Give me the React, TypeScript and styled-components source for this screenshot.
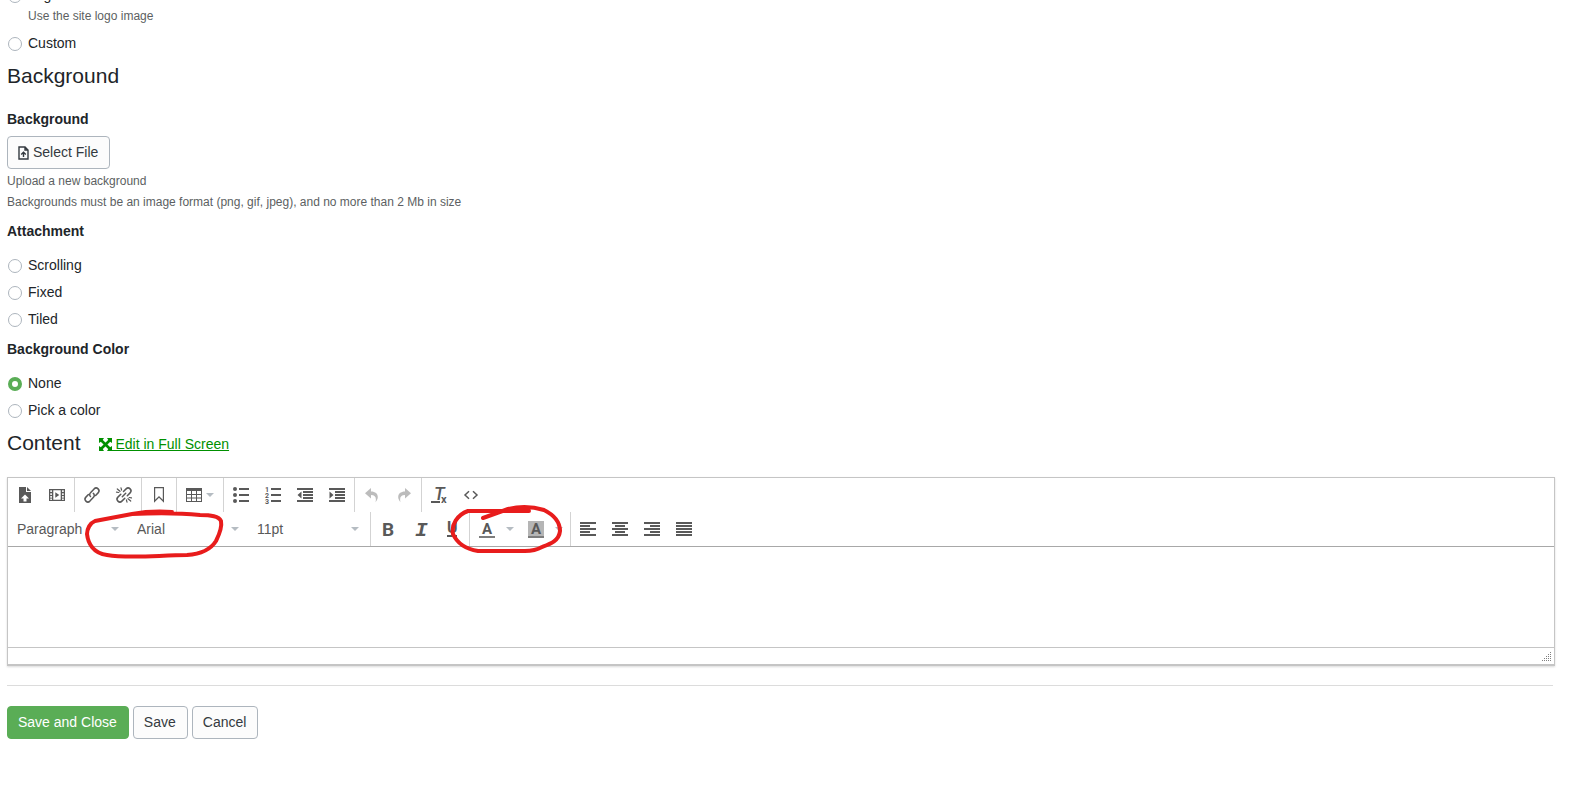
import React, { useState } from "react";
import styled, { createGlobalStyle } from "styled-components";

const GlobalStyle = createGlobalStyle`
  *, *::before, *::after { box-sizing: border-box; }
  html, body { margin: 0; background: #fff; }
  body {
    font: 14px/21px "Liberation Sans", Arial, sans-serif;
    color: #212529;
    overflow-x: hidden;
  }
`;

const ink = "#595959";
const line = "#c5c5c5";

const Page = styled.main`
  margin-top: -18px;
  padding: 0 15px 24px 7px;
`;

const Heading = styled.h2`
  margin: 0;
  font-size: 21px;
  line-height: 38px;
  font-weight: 400;
`;

const HeadingRow = styled.div`
  display: flex;
  align-items: center;
  gap: 18px;
  margin-bottom: 15px;
`;

const Field = styled.fieldset<{ $gap?: number }>`
  display: block;
  min-width: 0;
  border: 0;
  margin: 0;
  padding: ${(p) => p.$gap ?? 6}px 0 0;
`;

const FieldTitle = styled.div<{ $space?: number }>`
  font-weight: 700;
  margin-bottom: ${(p) => p.$space ?? 10}px;
`;

const Choice = styled.label`
  display: flex;
  align-items: center;
  gap: 6px;
  height: 27px;
  padding-left: 1px;
`;

const Radio = styled.input`
  appearance: none;
  width: 14px;
  height: 14px;
  margin: 1px 0 0;
  border: 1px solid #adb5bd;
  border-radius: 50%;
  background: #fff;
  &:checked {
    border: 4px solid #5aad56;
  }
`;

const Hint = styled.p`
  margin: 0;
  font-size: 12px;
  line-height: 21px;
  color: #5c5f62;
`;

const ChoiceHint = styled(Hint)`
  padding: 0 0 6px 21px;
  line-height: 15px;
`;

const Button = styled.button<{ $primary?: boolean }>`
  display: inline-flex;
  align-items: center;
  gap: 4px;
  height: 33px;
  padding: 0 11px 0 10px;
  border: 1px solid ${(p) => (p.$primary ? "#5aad56" : "#adb5bd")};
  border-radius: 4px;
  background: ${(p) => (p.$primary ? "#5aad56" : "#fcfcfc")};
  color: ${(p) => (p.$primary ? "#fff" : "#343a40")};
  font: inherit;
`;

const UploadRow = styled.div`
  display: flex;
  margin-bottom: 2px;
`;

const FullScreenLink = styled.a`
  display: inline-flex;
  align-items: center;
  padding-top: 2px;
  color: #009000;
  white-space: pre;
`;

const Editor = styled.section`
  position: relative;
  border: 1px solid ${line};
  border-bottom-width: 2px;
  box-shadow: 0 1px 2px rgba(0, 0, 0, 0.15);
  color: ${ink};
`;

const Toolbar = styled.div`
  border-bottom: 1px solid #a8a8a8;
`;

const ToolRow = styled.div`
  display: flex;
  height: 34px;
`;

const ToolGroup = styled.div`
  display: flex;
  align-items: center;
  padding: 0 1px;
  border-right: 1px solid #d3d3d3;
  &:last-child {
    border-right: 0;
  }
`;

const Tool = styled.button<{ $width?: number; $faded?: boolean }>`
  display: flex;
  align-items: center;
  gap: 4px;
  width: ${(p) => p.$width ?? 32}px;
  height: 32px;
  padding: 0 0 0 8px;
  border: 0;
  background: none;
  color: ${ink};
  opacity: ${(p) => (p.$faded ? 0.4 : 1)};
`;

const Picker = styled.label`
  display: flex;
  align-items: center;
  width: 120px;
  padding-right: 10px;
`;

const PickerSelect = styled.select`
  appearance: none;
  flex: 1;
  min-width: 0;
  height: 32px;
  padding: 0 0 0 8px;
  border: 0;
  background: none;
  font: inherit;
  color: ${ink};
`;

const Body = styled.textarea`
  display: block;
  width: 100%;
  height: 100px;
  padding: 8px;
  border: 0;
  resize: none;
  outline: 0;
  font: inherit;
`;

const StatusBar = styled.div`
  display: flex;
  justify-content: flex-end;
  align-items: flex-end;
  height: 17px;
  padding: 0 2px 2px 0;
  border-top: 1px solid ${line};
`;

const Marks = styled.svg`
  position: absolute;
  left: 72px;
  top: 22px;
  pointer-events: none;
`;

const Rule = styled.hr`
  height: 1px;
  margin: 19px 2px 20px 0;
  border: 0;
  background: #dcdcdc;
`;

const Actions = styled.div`
  display: flex;
  gap: 4px;
`;

const Svg = styled.svg`
  flex: none;
  display: block;
  overflow: visible;
`;

const Icon = ({ children }: { children: React.ReactNode }) => (
  <Svg width="16" height="16" viewBox="0 0 16 16" fill="currentColor" aria-hidden="true">
    {children}
  </Svg>
);

const Caret = () => (
  <Svg width="8" height="4" viewBox="0 0 8 4" fill="#b5bcc2" aria-hidden="true">
    <path d="M0 0h8L4 4z" />
  </Svg>
);

const sans = "Roboto, 'Liberation Sans', sans-serif";

const icons = {
  upload: (
    <path fillRule="evenodd" d="M2 0h7v5h5v11H2zM10 0l4 4h-4zM8 7.500l-4 4h2.500v3h3v-3H12z" />
  ),
  media: (
    <path
      fillRule="evenodd"
      d="M0 2h16v12H0zM1.300 3.200v1.800h1.600V3.200zM1.300 6.200V8h1.600V6.200zM1.300 9v1.700h1.600V9zM1.300 11.500v1.500h1.600v-1.500zM13.100 3.200v1.800h1.600V3.200zM13.100 6.200V8h1.600V6.200zM13.100 9v1.700h1.600V9zM13.100 11.500v1.500h1.600v-1.500zM4.300 3.300v9.400h7.400V3.300zM6.300 5.200l4 2.800-4 2.800z"
    />
  ),
  link: (
    <g fill="none" stroke="currentColor" strokeWidth="1.500" strokeLinecap="round">
      <path d="M6.500 9.500a2.500 2.500 0 0 1 0-3.700l3.600-3.900a2.600 2.600 0 0 1 4 4L11.600 8.500" />
      <path d="M9.300 6.400a2.500 2.500 0 0 1 .2 3.800l-3.600 3.900a2.600 2.600 0 0 1-4-4l2.500-2.600" />
    </g>
  ),
  unlink: (
    <g fill="none" stroke="currentColor" strokeWidth="1.500" strokeLinecap="round">
      <path d="M7.500 4.500l2.600-2.600a2.600 2.600 0 0 1 4 4L11.300 8.700M8.800 11.200l-2.900 2.900a2.600 2.600 0 0 1-4-4l2.900-2.900M6.300 9.700l3.400-3.400" />
      <path strokeWidth="1.200" d="M1.300 2l2.700 2.300M5 .8l.6 2.300M.5 5.200l2.300.3M14.700 14L12 11.700M11 15.200l-.6-2.300M15.500 10.800l-2.300-.3" />
    </g>
  ),
  bookmark: <path fillRule="evenodd" d="M3 0h10v15.700l-5-5-5 5zM4.200 1.200v11.600L8 9l3.800 3.800V1.200z" />,
  table: (
    <path
      fillRule="evenodd"
      d="M0 1h16v14H0zM1 4v3h4V4zM6 4v3h4V4zM11 4v3h4V4zM1 8v2.500h4V8zM6 8v2.500h4V8zM11 8v2.500h4V8zM1 11.500V14h4v-2.500zM6 11.500V14h4v-2.500zM11 11.500V14h4v-2.500z"
    />
  ),
  bullets: (
    <>
      <circle cx="2" cy="2" r="2" />
      <circle cx="2" cy="8" r="2" />
      <circle cx="2" cy="14" r="2" />
      <path d="M6 1h10v2H6zM6 7h10v2H6zM6 13h10v2H6z" />
    </>
  ),
  numbers: (
    <>
      <g fontFamily={sans} fontSize="7" fontWeight="700">
        <text x="0" y="5">1</text>
        <text x="0" y="11">2</text>
        <text x="0" y="17">3</text>
      </g>
      <path d="M6 1h10v2H6zM6 7h10v2H6zM6 13h10v2H6z" />
    </>
  ),
  outdent: <path d="M0 1h16v2H0zM6 4h10v2H6zM6 7h10v2H6zM6 10h10v2H6zM0 13h16v2H0zM4.500 4.500v7L.5 8z" />,
  indent: <path d="M0 1h16v2H0zM6 4h10v2H6zM6 7h10v2H6zM6 10h10v2H6zM0 13h16v2H0zM.5 4.500v7l4-3.500z" />,
  undo: <path d="M7 1v3.500c5 0 7.500 3 6.600 7-.4 1.500-1.200 2.800-2.100 3.800C12.600 10.700 11.500 8 7 8v3.500L1 6.200z" />,
  redo: <path d="M9 1v3.500c-5 0-7.500 3-6.600 7 .4 1.500 1.200 2.800 2.100 3.800C3.400 10.700 4.500 8 9 8v3.500l6-5.300z" />,
  clear: (
    <>
      <text x="3" y="13" fontFamily={sans} fontSize="18" fontStyle="italic" fontWeight="500">
        T<tspan x="10" y="16" fontSize="11" fontStyle="normal" fontWeight="700">x</tspan>
      </text>
      <path d="M0 14h9v2H0z" />
    </>
  ),
  code: <path fill="none" stroke="currentColor" strokeWidth="1.500" d="M6 4.200L2 8l4 3.800M10 4.200L14 8l-4 3.800" />,
  bold: (
    <text x="2" y="15" fontFamily={sans} fontSize="19" fontWeight="700">B</text>
  ),
  italic: (
    <text x="3" y="15" fontFamily="'Liberation Mono', monospace" fontSize="21" fontStyle="italic" fontWeight="700">I</text>
  ),
  underline: (
    <>
      <text x="3" y="12" fontFamily={sans} fontSize="16" fontWeight="700">U</text>
      <path d="M3 14h10v2H3z" />
    </>
  ),
  color: (
    <>
      <text x="3" y="13" fontFamily={sans} fontSize="15" fontWeight="700">A</text>
      <path fill="#7d7d7d" d="M0 15h16v2H0z" />
    </>
  ),
  highlight: (
    <>
      <path fill="#b5b5b5" d="M0 0h16v15H0z" />
      <text x="3" y="13" fontFamily={sans} fontSize="15" fontWeight="700">A</text>
      <path fill="#7d7d7d" d="M0 15h16v2H0z" />
    </>
  ),
  left: <path d="M0 1h16v2H0zM0 4h10v2H0zM0 7h16v2H0zM0 10h10v2H0zM0 13h16v2H0z" />,
  center: <path d="M0 1h16v2H0zM3 4h10v2H3zM0 7h16v2H0zM3 10h10v2H3zM0 13h16v2H0z" />,
  right: <path d="M0 1h16v2H0zM6 4h10v2H6zM0 7h16v2H0zM6 10h10v2H6zM0 13h16v2H0z" />,
  justify: <path d="M0 1h16v2H0zM0 4h16v2H0zM0 7h16v2H0zM0 10h16v2H0zM0 13h16v2H0z" />,
};

type IconName = keyof typeof icons;

interface ToolSpec {
  icon: IconName;
  label: string;
  menu?: boolean;
  faded?: boolean;
}

const topGroups: ToolSpec[][] = [
  [{ icon: "upload", label: "Insert file" }, { icon: "media", label: "Insert media" }],
  [{ icon: "link", label: "Insert link" }, { icon: "unlink", label: "Remove link" }],
  [{ icon: "bookmark", label: "Anchor" }],
  [{ icon: "table", label: "Table", menu: true }],
  [
    { icon: "bullets", label: "Bullet list" },
    { icon: "numbers", label: "Numbered list" },
    { icon: "outdent", label: "Decrease indent" },
    { icon: "indent", label: "Increase indent" },
  ],
  [{ icon: "undo", label: "Undo", faded: true }, { icon: "redo", label: "Redo", faded: true }],
  [{ icon: "clear", label: "Clear formatting" }, { icon: "code", label: "Source code" }],
];

const styleTools: ToolSpec[] = [
  { icon: "bold", label: "Bold" },
  { icon: "italic", label: "Italic" },
  { icon: "underline", label: "Underline" },
];

const alignTools: ToolSpec[] = [
  { icon: "left", label: "Align left" },
  { icon: "center", label: "Align center" },
  { icon: "right", label: "Align right" },
  { icon: "justify", label: "Justify" },
];

const Tools = ({ items }: { items: ToolSpec[] }) => (
  <ToolGroup>
    {items.map((t) => (
      <Tool key={t.icon} type="button" aria-label={t.label} $faded={t.faded} $width={t.menu ? 44 : 32}>
        <Icon>{icons[t.icon]}</Icon>
        {t.menu && <Caret />}
      </Tool>
    ))}
  </ToolGroup>
);

const CaretButton = styled.button`
  width: 17px;
  height: 32px;
  padding: 0 0 0 3px;
  border: 0;
  background: none;
`;

const ColorTool = ({ icon, label }: { icon: IconName; label: string }) => (
  <>
    <Tool type="button" aria-label={label}>
      <Icon>{icons[icon]}</Icon>
    </Tool>
    <CaretButton type="button" aria-label={`${label} options`}>
      <Caret />
    </CaretButton>
  </>
);

const pickers = [
  { label: "Block format", options: ["Paragraph", "Heading 1", "Heading 2"] },
  { label: "Font family", options: ["Arial", "Georgia", "Verdana"] },
  { label: "Font size", options: ["11pt", "12pt", "14pt"] },
];

interface ChoicesProps {
  name: string;
  options: string[];
  value: string;
  onChange: (v: string) => void;
}

const Choices = ({ name, options, value, onChange }: ChoicesProps) => (
  <>
    {options.map((o) => (
      <Choice key={o}>
        <Radio type="radio" name={name} checked={value === o} onChange={() => onChange(o)} />
        {o}
      </Choice>
    ))}
  </>
);

export default function App() {
  const [logo, setLogo] = useState("");
  const [attachment, setAttachment] = useState("");
  const [color, setColor] = useState("None");

  return (
    <>
      <GlobalStyle />
      <Page>
        <Choices name="logo" options={["Logo"]} value={logo} onChange={setLogo} />
        <ChoiceHint>Use the site logo image</ChoiceHint>
        <Choices name="logo" options={["Custom"]} value={logo} onChange={setLogo} />

        <Heading>Background</Heading>
        <Field $gap={14} aria-label="Background">
          <FieldTitle $space={6}>Background</FieldTitle>
          <UploadRow>
            <Button type="button">
              <Svg width="11" height="14" viewBox="0 0 11 14" fill="none" stroke="currentColor" strokeWidth="1.400" aria-hidden="true">
                <path d="M1 1h6l3 3v9H1zM7 1v3h3M5.500 11V6.500M3.200 8.500l2.300-2.200 2.300 2.200" />
              </Svg>
              Select File
            </Button>
          </UploadRow>
          <Hint>Upload a new background</Hint>
          <Hint>Backgrounds must be an image format (png, gif, jpeg), and no more than 2 Mb in size</Hint>
        </Field>
        <Field $gap={8} aria-label="Attachment">
          <FieldTitle>Attachment</FieldTitle>
          <Choices name="attachment" options={["Scrolling", "Fixed", "Tiled"]} value={attachment} onChange={setAttachment} />
        </Field>
        <Field aria-label="Background Color">
          <FieldTitle>Background Color</FieldTitle>
          <Choices name="color" options={["None", "Pick a color"]} value={color} onChange={setColor} />
        </Field>

        <HeadingRow>
          <Heading>Content</Heading>
          <FullScreenLink href="#editor">
            <Svg width="13" height="13" viewBox="0 0 13 13" fill="currentColor" aria-hidden="true">
              <path d="M0 0h5L3.700 1.900l2.800 2.800 2.800-2.800L8 0h5v5l-1.900-1.300-2.800 2.800 2.800 2.800L13 8v5H8l1.300-1.900-2.800-2.800-2.800 2.800L5 13H0V8l1.900 1.300 2.800-2.800-2.800-2.800L0 5z" />
              <path d="M2 2l9 9M11 2l-9 9" stroke="currentColor" strokeWidth="2.400" />
            </Svg>
            <span> Edit in Full Screen</span>
          </FullScreenLink>
        </HeadingRow>

        <Editor id="editor">
          <Toolbar>
            <ToolRow>
              {topGroups.map((g) => (
                <Tools key={g[0].icon} items={g} />
              ))}
            </ToolRow>
            <ToolRow>
              <ToolGroup>
                {pickers.map((p) => (
                  <Picker key={p.label}>
                    <PickerSelect aria-label={p.label}>
                      {p.options.map((o) => (
                        <option key={o}>{o}</option>
                      ))}
                    </PickerSelect>
                    <Caret />
                  </Picker>
                ))}
              </ToolGroup>
              <Tools items={styleTools} />
              <ToolGroup>
                <ColorTool icon="color" label="Text color" />
                <ColorTool icon="highlight" label="Background color" />
              </ToolGroup>
              <Tools items={alignTools} />
            </ToolRow>
          </Toolbar>
          <Body aria-label="Content" />
          <StatusBar>
            <Svg width="10" height="10" viewBox="0 0 10 10" fill="#808080" aria-hidden="true">
              <path d="M8 0h1v1H8zM6 2h1v1H6zM8 2h1v1H8zM4 4h1v1H4zM6 4h1v1H6zM8 4h1v1H8zM2 6h1v1H2zM4 6h1v1H4zM6 6h1v1H6zM8 6h1v1H8zM0 8h1v1H0zM2 8h1v1H2zM4 8h1v1H4zM6 8h1v1H6zM8 8h1v1H8z" />
            </Svg>
          </StatusBar>
          <Marks width="490" height="65" viewBox="80 500 490 65" fill="none" stroke="#e81c1c" strokeWidth="4" strokeLinecap="round" strokeLinejoin="round" aria-hidden="true">
            <path d="M172 512C158 511 143 512 132 514L95 521C90 523 87 529 87 534C88 543 93 553 107 555C130 559 160 555 187 555C202 554 211 549 216 541C220 533 222 526 221 521C219 516 211 515 200 515C180 513 155 513 132 514" />
            <path d="M483 518L508 509C521 506 534 507 544 510C554 515 560 522 560 531C559 541 550 544 542 547C535 551 530 551 525 551L478 551C466 549 457 543 453 534C451 525 457 515 468 511C473 511 480 511 487 511L529 511" />
          </Marks>
        </Editor>

        <Rule />
        <Actions>
          <Button type="submit" $primary>Save and Close</Button>
          <Button type="button">Save</Button>
          <Button type="button">Cancel</Button>
        </Actions>
      </Page>
    </>
  );
}
